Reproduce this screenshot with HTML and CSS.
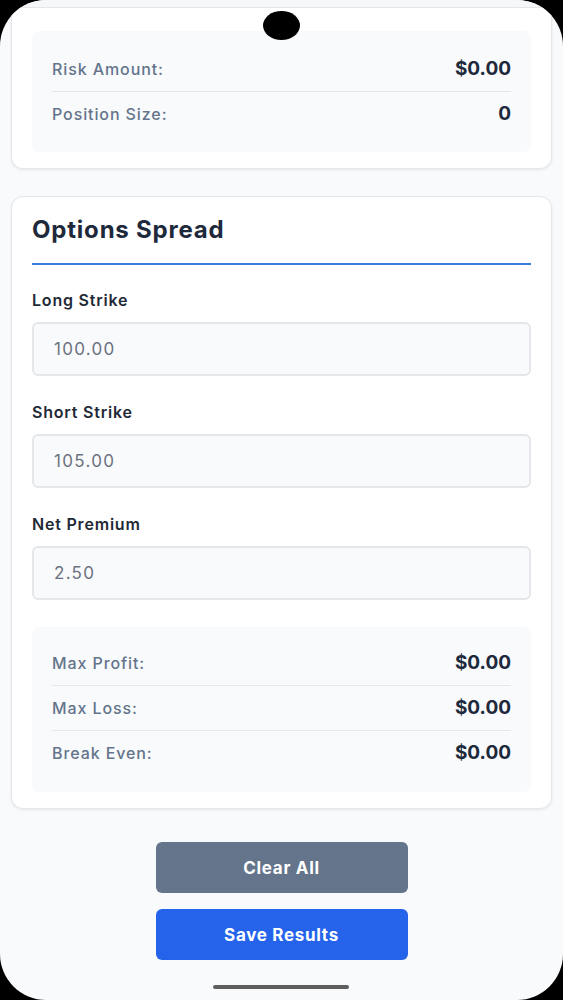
FILE: index.html
```html
<!DOCTYPE html>
<html lang="en">
<head>
<meta charset="utf-8">
<title>Options Spread</title>
<link rel="stylesheet" href="styles.css">
</head>
<body>
<div class="screen">
  <div class="status-edge"></div>
  <div class="content">
    <section class="card card-cut">
      <div class="results">
        <div class="row"><span class="row-label">Risk Amount:</span><span class="row-value">$0.00</span></div>
        <div class="row"><span class="row-label">Position Size:</span><span class="row-value">0</span></div>
      </div>
    </section>

    <section class="card">
      <h2 class="card-title">Options Spread</h2>
      <div class="field">
        <label class="field-label">Long Strike</label>
        <input class="field-input" type="text" placeholder="100.00">
      </div>
      <div class="field">
        <label class="field-label">Short Strike</label>
        <input class="field-input" type="text" placeholder="105.00">
      </div>
      <div class="field">
        <label class="field-label">Net Premium</label>
        <input class="field-input" type="text" placeholder="2.50">
      </div>
      <div class="results results-spread">
        <div class="row"><span class="row-label">Max Profit:</span><span class="row-value">$0.00</span></div>
        <div class="row"><span class="row-label">Max Loss:</span><span class="row-value">$0.00</span></div>
        <div class="row"><span class="row-label">Break Even:</span><span class="row-value">$0.00</span></div>
      </div>
    </section>

    <div class="actions">
      <button class="btn btn-gray">Clear All</button>
      <button class="btn btn-blue">Save Results</button>
    </div>
  </div>
  <div class="camera"></div>
  <div class="home-indicator"></div>
</div>
</body>
</html>
```

FILE: styles.css
```css
* { box-sizing: border-box; }
html, body { margin: 0; padding: 0; background: #000; }
body { font-family: Inter, "Noto Sans", Arial, sans-serif; }

.screen {
  position: relative;
  width: 563px;
  height: 1000px;
  background: #f8fafc;
  border-radius: 46px;
  overflow: hidden;
}

.status-edge {
  height: 8px;
  background: #f6f7f9;
  border-bottom: 1px solid #e6e8eb;
}

.content {
  padding: 0 11px;
}

.card {
  background: #fff;
  border: 1px solid #e5e7eb;
  border-radius: 12px;
  padding: 20px 20px 16px;
  box-shadow: 0 1px 3px rgba(15, 23, 42, 0.08);
  margin-bottom: 27px;
}

.card-cut {
  border-top: none;
  border-top-left-radius: 0;
  border-top-right-radius: 0;
  padding-top: 23px;
}

.results {
  background: #f8fafc;
  border-radius: 8px;
  padding: 16px 20px;
}

.results-spread {
  margin-top: 27px;
  padding: 14px 20px 17px;
}

.row {
  display: flex;
  justify-content: space-between;
  align-items: center;
  padding: 12px 0;
  line-height: 20px;
}
.row + .row { border-top: 1px solid #e5e7eb; }

.row-label {
  font-size: 16px;
  font-weight: 500;
  letter-spacing: 0.9px;
  color: #64748b;
}
.row-value {
  font-size: 19px;
  font-weight: 700;
  color: #1e293b;
}

.card-title {
  margin: 0;
  font-size: 24px;
  line-height: 26px;
  font-weight: 700;
  letter-spacing: 0.8px;
  color: #1e293b;
  padding-bottom: 20px;
  border-bottom: 2px solid #3b7be0;
}

.field { margin-top: 25px; }
.field + .field { margin-top: 26px; }

.field-label {
  display: block;
  font-size: 16px;
  line-height: 20px;
  font-weight: 600;
  letter-spacing: 0.8px;
  color: #1f2937;
  margin-bottom: 12px;
}

.field-input {
  display: block;
  width: 100%;
  height: 54px;
  background: #f9fafb;
  border: 2px solid #e5e7eb;
  border-radius: 6px;
  padding: 0 20px;
  font-family: Inter, "Noto Sans", Arial, sans-serif;
  font-size: 17px;
  letter-spacing: 1.3px;
  color: #1f2937;
  outline: none;
}
.field-input::placeholder { color: #6b7280; }

.actions {
  display: flex;
  flex-direction: column;
  align-items: center;
  gap: 16px;
  padding-top: 6px;
}

.btn {
  width: 252px;
  height: 51px;
  border: none;
  border-radius: 6px;
  font-family: Inter, "Noto Sans", Arial, sans-serif;
  font-size: 17px;
  font-weight: 700;
  letter-spacing: 0.7px;
  color: #fff;
}
.btn-gray { background: #64748b; }
.btn-blue { background: #2563eb; }

.camera {
  position: absolute;
  left: 263px;
  top: 11px;
  width: 37px;
  height: 29px;
  border-radius: 50%;
  background: #000;
}

.home-indicator {
  position: absolute;
  left: 213px;
  top: 985px;
  width: 136px;
  height: 4px;
  border-radius: 2px;
  background: #5e5e5e;
}
```
